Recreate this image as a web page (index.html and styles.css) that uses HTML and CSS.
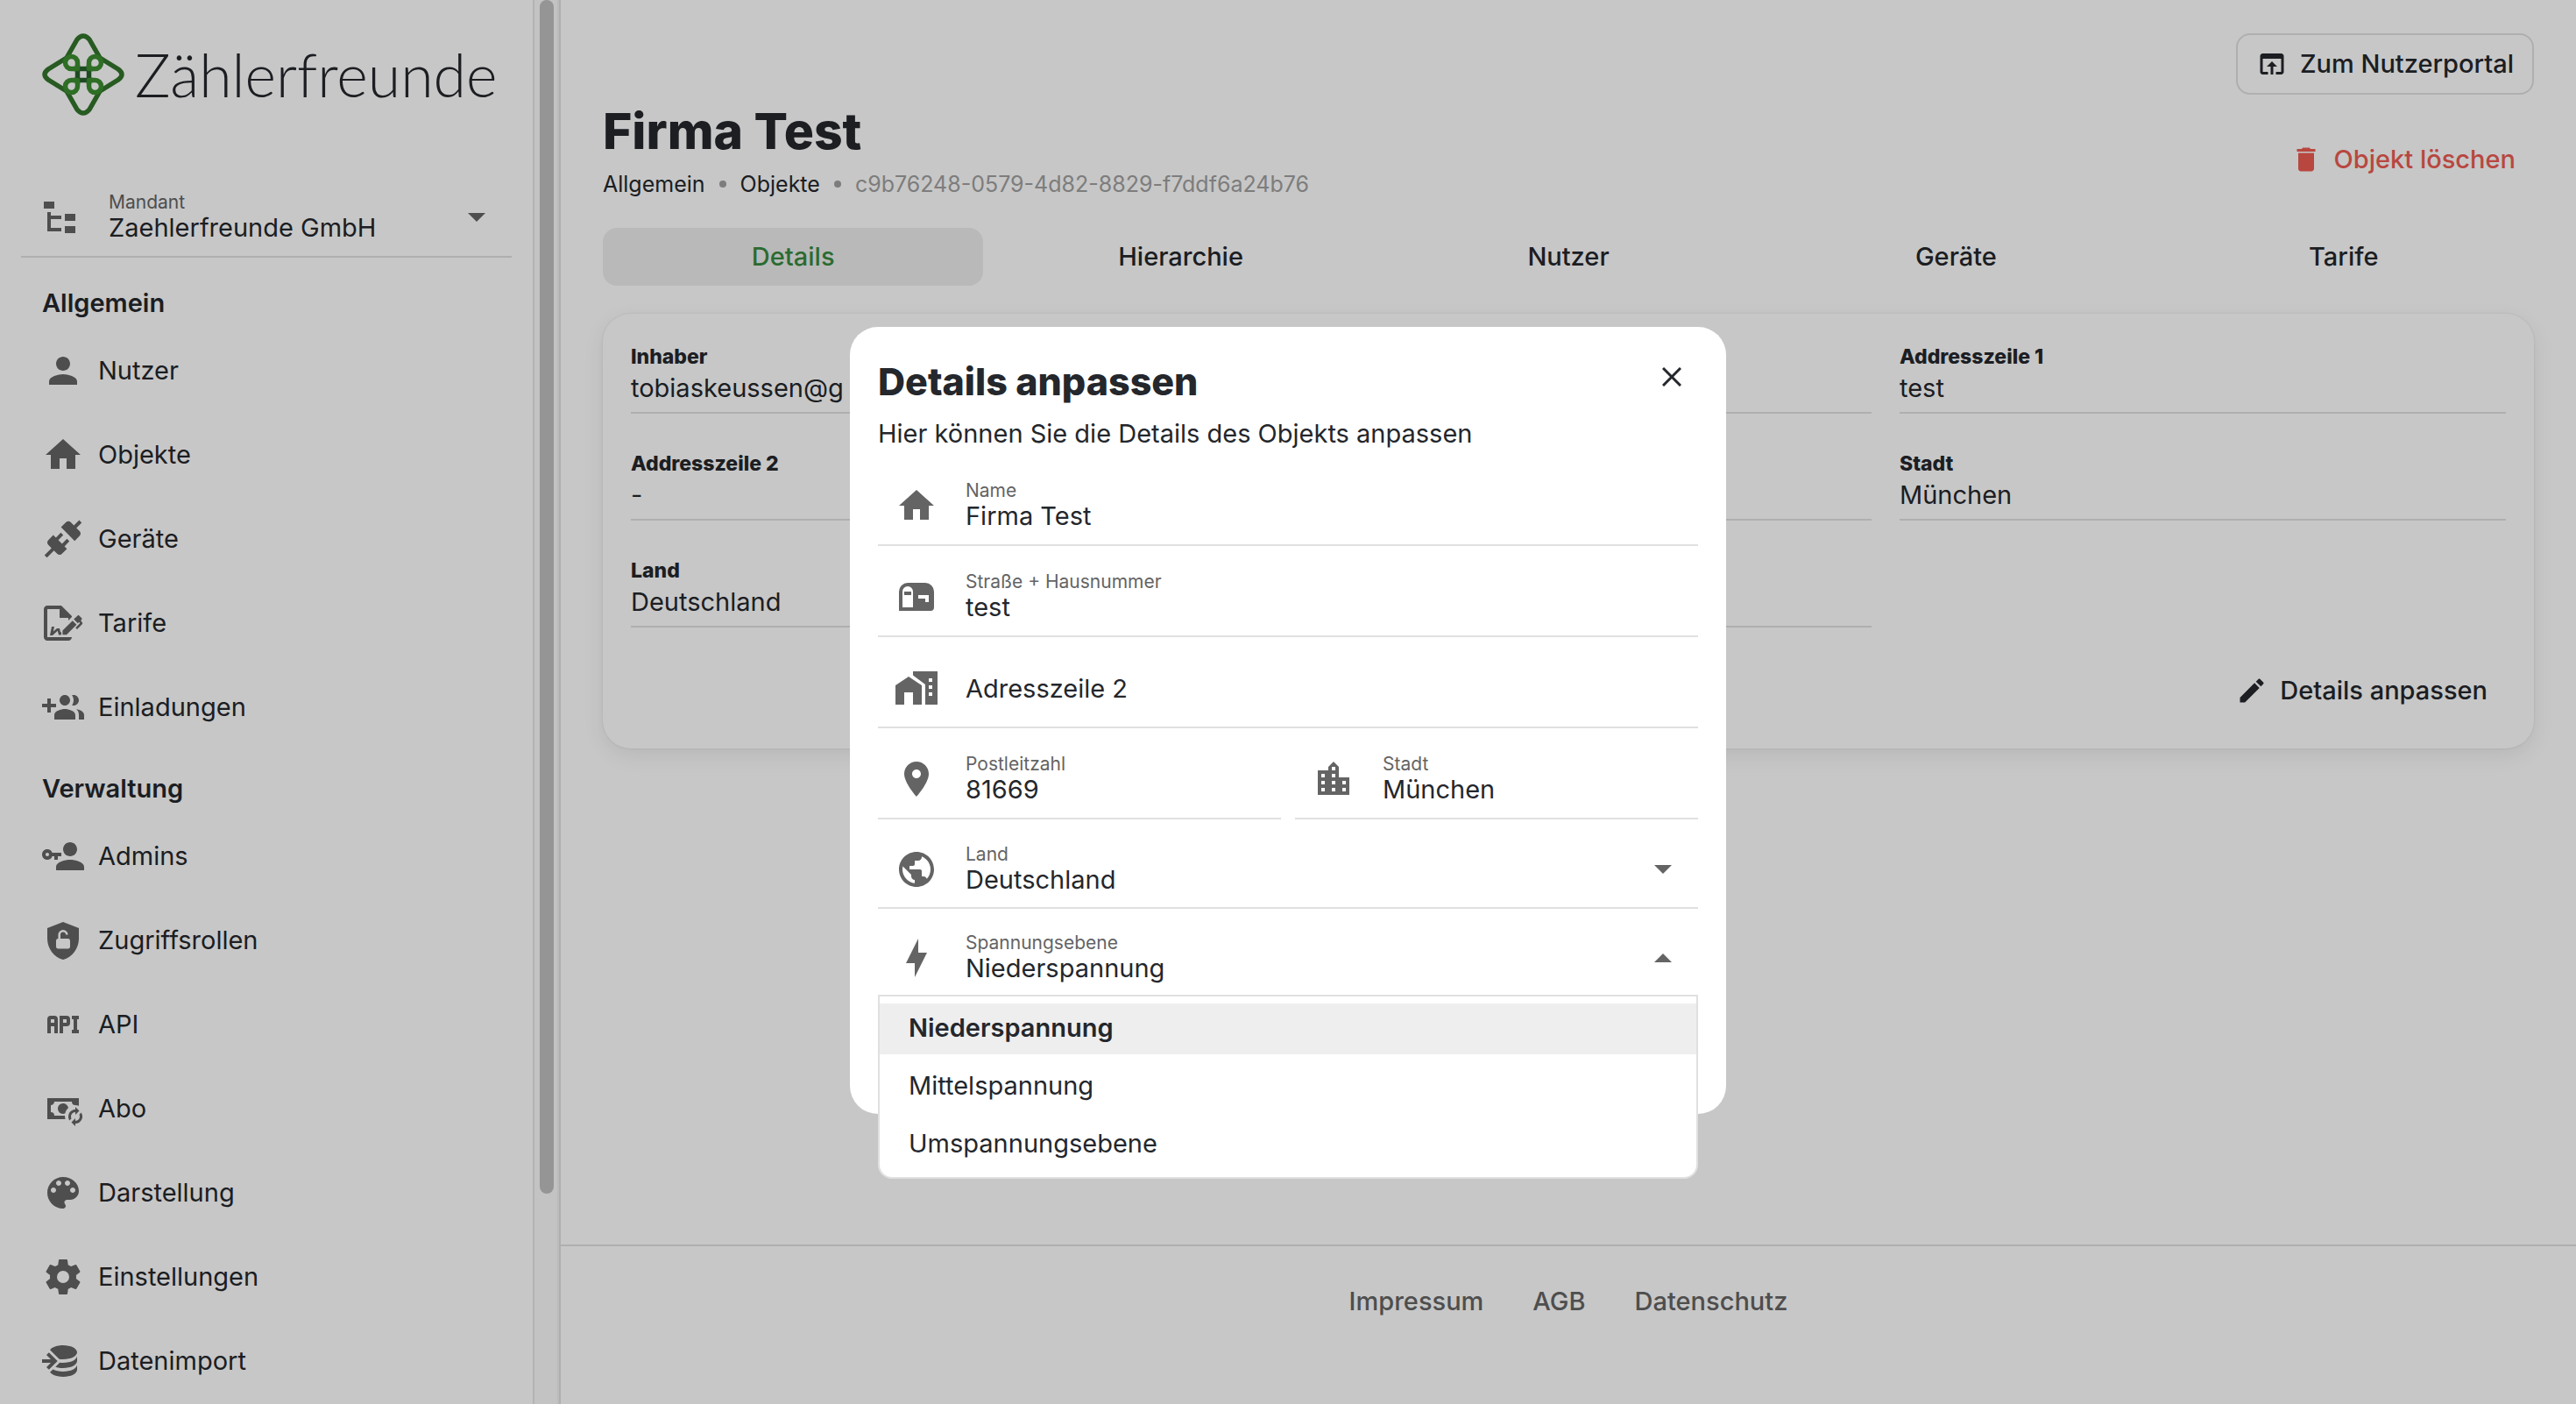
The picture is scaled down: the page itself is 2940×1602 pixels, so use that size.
FILE: index.html
```html
<!DOCTYPE html>
<html lang="de">
<head>
<meta charset="utf-8">
<meta name="viewport" content="width=device-width, initial-scale=1">
<title>Firma Test – Zählerfreunde</title>
<link rel="stylesheet" href="styles.css">
</head>
<body>
<div class="page">
  <aside class="sidebar">
    <div class="sidebar-content">
      <a class="logo" href="#">
        <svg class="logo-mark" viewBox="0 0 94 94" aria-hidden="true">
          <g fill="none" stroke-width="5.5" stroke-linejoin="round">
            <path stroke="#32752b" d="M28 28L40 7Q47-1 54 7L66 28L87 41Q95 47 87 53L66 66L54 87Q47 95 40 87L28 66L7 53Q-1 47 7 41Z"/>
            <path stroke="#26602a" d="M40.500 36V58M53.500 36V58M36 40.500H58M36 53.500H58"/>
            <path stroke="#3b8d30" d="M40.500 40.500H33.500a7 7 0 1 1 7-7ZM53.500 40.500V33.500a7 7 0 1 1 7 7ZM53.500 53.500H60.500a7 7 0 1 1-7 7ZM40.500 53.500V60.500a7 7 0 1 1-7-7Z"/>
          </g>
        </svg>
        <span class="logo-text">Zählerfreunde</span>
      </a>

      <div class="field tenant">
        <svg class="icon" viewBox="0 0 48 48" aria-hidden="true"><path d="M6 6h12v8H6zM10 18h4v4h12v4H14v10h12v4H10zM30 20h12v8H30zM30 34h12v8H30z"/></svg>
        <div class="field-text">
          <label for="tenant">Mandant</label>
          <select id="tenant"><option>Zaehlerfreunde GmbH</option></select>
        </div>
        <svg class="arrow" viewBox="0 0 20 10" aria-hidden="true"><path d="M0 0h20L10 10z"/></svg>
      </div>

      <nav class="nav">
        <h2>Allgemein</h2>
        <a href="#"><svg class="icon" viewBox="0 0 24 24" aria-hidden="true"><path d="M12 12c2.210 0 4-1.790 4-4s-1.790-4-4-4-4 1.790-4 4 1.790 4 4 4zm0 2c-2.670 0-8 1.340-8 4v2h16v-2c0-2.660-5.330-4-8-4z"/></svg>Nutzer</a>
        <a href="#"><svg class="icon" viewBox="0 0 24 24" aria-hidden="true"><path d="M10 20v-6h4v6h5v-8h3L12 3 2 12h3v8z"/></svg>Objekte</a>
        <a href="#"><svg class="icon" viewBox="0 0 24 24" aria-hidden="true"><path d="M21.400 7.500C22.200 8.300 22.200 9.600 21.400 10.300L18.600 13.100L10.800 5.300L13.600 2.500C14.400 1.700 15.700 1.700 16.400 2.500L18.200 4.300L21.200 1.300L22.600 2.700L19.600 5.700L21.400 7.500M15.600 13.300L14.200 11.900L11.400 14.700L9.300 12.600L12.100 9.800L10.700 8.400L7.900 11.200L6.400 9.800L3.600 12.600C2.800 13.400 2.800 14.700 3.600 15.400L5.400 17.200L1.400 21.200L2.800 22.600L6.800 18.600L8.600 20.400C9.400 21.200 10.700 21.200 11.400 20.400L14.200 17.600L12.800 16.200L15.600 13.300Z"/></svg>Geräte</a>
        <a href="#"><svg class="icon" viewBox="0 0 24 24" aria-hidden="true"><path d="M19.700 12.900L14 18.600H11.700V16.300L17.400 10.600L19.700 12.900M23.100 12.100C23.100 12.400 22.800 12.700 22.500 13L20 15.500L19.100 14.600L21.700 12L21.100 11.400L20.400 12.100L18.100 9.800L20.300 7.700C20.500 7.500 20.900 7.500 21.200 7.700L22.600 9.100C22.800 9.300 22.800 9.700 22.600 10C22.400 10.200 22.200 10.400 22.200 10.600C22.200 10.800 22.400 11 22.600 11.200C22.900 11.500 23.200 11.800 23.100 12.100M3 20V4H10V9H15V10.500L17 8.500V8L11 2H3C1.900 2 1 2.900 1 4V20C1 21.100 1.900 22 3 22H15C16.100 22 17 21.100 17 20H3M11 17.100C10.800 17.100 10.600 17.200 10.500 17.200L10 15H8.500L6.400 16.700L7 14H5.500L4.500 19H6L8.900 16.400L9.500 18.700H10.500L11 18.600V17.100Z"/></svg>Tarife</a>
        <a href="#"><svg class="icon" viewBox="0 0 24 24" aria-hidden="true"><path d="M13 13C11 13 7 14 7 16.500V19H19V16.500C19 14 15 13 13 13M19.620 13.160C20.450 13.880 21 14.820 21 16.500V19H24V16.500C24 14.460 21.630 13.500 19.620 13.160M13 11C14.660 11 16 9.660 16 8C16 6.340 14.660 5 13 5C11.340 5 10 6.340 10 8C10 9.660 11.340 11 13 11M18 11C19.660 11 21 9.660 21 8C21 6.340 19.660 5 18 5C17.680 5 17.370 5.050 17.080 5.140C17.650 5.950 18 6.940 18 8C18 9.060 17.650 10.040 17.080 10.850C17.370 10.950 17.680 11 18 11M8 10H5V7H3V10H0V12H3V15H5V12H8V10Z"/></svg>Einladungen</a>
        <h2>Verwaltung</h2>
        <a href="#"><svg class="icon" viewBox="0 0 24 24" aria-hidden="true"><path d="M11 10V12H9V14H7V12H5.800C5.400 13.200 4.300 14 3 14C1.300 14 0 12.700 0 11S1.300 8 3 8C4.300 8 5.400 8.800 5.800 10H11M3 10C2.400 10 2 10.400 2 11S2.400 12 3 12 4 11.600 4 11 3.600 10 3 10M16 14C18.700 14 24 15.300 24 18V20H8V18C8 15.300 13.300 14 16 14M16 12C13.800 12 12 10.200 12 8S13.800 4 16 4 20 5.800 20 8 18.200 12 16 12Z"/></svg>Admins</a>
        <a href="#"><svg class="icon" viewBox="0 0 24 24" aria-hidden="true"><path fill-rule="evenodd" d="M12 1.500L3 5V11C3 16.550 6.840 21.740 12 23C17.160 21.740 21 16.550 21 11V5L12 1.500M9.200 11V8.800a2.800 2.800 0 0 1 5.600 0H13.500a1.500 1.500 0 0 0-3 0V11H14.800a1.200 1.200 0 0 1 1.200 1.200V15.600a1.200 1.200 0 0 1-1.200 1.200H9.200A1.200 1.200 0 0 1 8 15.600V12.200A1.200 1.200 0 0 1 9.200 11Z"/></svg>Zugriffsrollen</a>
        <a href="#"><svg class="icon" viewBox="0 0 24 24" aria-hidden="true"><path d="M7 7H5A2 2 0 0 0 3 9V17H5V13H7V17H9V9A2 2 0 0 0 7 7M7 11H5V9H7M14 7H10V17H12V13H14A2 2 0 0 0 16 11V9A2 2 0 0 0 14 7M14 11H12V9H14M20 9V15H21V17H17V15H18V9H17V7H21V9Z"/></svg>API</a>
        <a href="#"><svg class="icon" viewBox="0 0 24 24" aria-hidden="true"><path d="M3 6v12h10.320a6.400 6.400 0 0 1-.320-2H7a2 2 0 0 0-2-2v-4c1.110 0 2-.890 2-2h10a2 2 0 0 0 2 2v.060c.670 0 1.340.120 2 .340V6H3m9 3c-1.700.030-3 1.300-3 3s1.300 2.940 3 3c.380 0 .770-.080 1.140-.230c.270-1.100.720-2.140 1.830-3.160C14.850 10.280 13.590 8.970 12 9M19 11v1.500c-2.210 0-4 1.790-4 4 0 .820.250 1.580.670 2.210l1.090-1.090c-.170-.340-.260-.720-.260-1.120A2.500 2.500 0 0 1 19 14v1.500l2.250-2.250L19 11m3.330 3.290-1.090 1.090c.170.340.260.720.260 1.120A2.500 2.500 0 0 1 19 19v-1.500l-2.250 2.250L19 22v-1.500a4 4 0 0 0 3.330-6.210z"/></svg>Abo</a>
        <a href="#"><svg class="icon" viewBox="0 0 24 24" aria-hidden="true"><path d="M12 3c-4.970 0-9 4.030-9 9s4.030 9 9 9c.830 0 1.500-.670 1.500-1.500 0-.390-.150-.740-.390-1.010-.230-.260-.380-.610-.380-.990 0-.830.670-1.500 1.500-1.500H16c2.760 0 5-2.240 5-5 0-4.420-4.030-8-9-8zm-5.500 9c-.830 0-1.500-.670-1.500-1.500S5.670 9 6.500 9 8 9.670 8 10.500 7.330 12 6.500 12zm3-4C8.670 8 8 7.330 8 6.500S8.670 5 9.500 5s1.500.670 1.500 1.500S10.330 8 9.500 8zm5 0c-.830 0-1.500-.670-1.500-1.500S13.670 5 14.500 5s1.500.670 1.500 1.500S15.330 8 14.500 8zm3 4c-.830 0-1.500-.670-1.500-1.500S16.670 9 17.500 9s1.500.670 1.500 1.500-.670 1.500-1.500 1.500z"/></svg>Darstellung</a>
        <a href="#"><svg class="icon" viewBox="0 0 24 24" aria-hidden="true"><path d="M12,15.500A3.500,3.500 0 0,1 8.500,12A3.500,3.500 0 0,1 12,8.500A3.500,3.500 0 0,1 15.500,12A3.500,3.500 0 0,1 12,15.500M19.430,12.970C19.470,12.650 19.500,12.330 19.500,12C19.500,11.670 19.470,11.340 19.430,11L21.540,9.370C21.730,9.220 21.780,8.950 21.660,8.730L19.660,5.270C19.540,5.050 19.270,4.960 19.050,5.050L16.560,6.050C16.040,5.660 15.500,5.320 14.870,5.070L14.500,2.420C14.460,2.180 14.250,2 14,2H10C9.750,2 9.540,2.180 9.500,2.420L9.130,5.070C8.500,5.320 7.960,5.660 7.440,6.050L4.950,5.050C4.730,4.960 4.460,5.050 4.340,5.270L2.340,8.730C2.210,8.950 2.270,9.220 2.460,9.370L4.570,11C4.530,11.340 4.500,11.670 4.500,12C4.500,12.330 4.530,12.650 4.570,12.970L2.460,14.630C2.270,14.780 2.210,15.050 2.340,15.270L4.340,18.730C4.460,18.950 4.730,19.030 4.950,18.950L7.440,17.940C7.960,18.340 8.500,18.680 9.130,18.930L9.500,21.580C9.540,21.820 9.750,22 10,22H14C14.250,22 14.460,21.820 14.500,21.580L14.870,18.930C15.500,18.670 16.040,18.340 16.560,17.940L19.050,18.950C19.270,19.030 19.540,18.950 19.660,18.730L21.660,15.270C21.780,15.050 21.730,14.780 21.540,14.630L19.430,12.970Z"/></svg>Einstellungen</a>
        <a href="#"><svg class="icon" viewBox="0 0 24 24" aria-hidden="true"><path d="M12,3C8.590,3 5.690,4.070 4.540,5.570L9.790,10.820C10.500,10.930 11.220,11 12,11C16.420,11 20,9.210 20,7C20,4.790 16.420,3 12,3M3.920,7.080L2.500,8.500L5,11H0V13H5L2.500,15.500L3.920,16.920L8.840,12M20,9C20,11.210 16.420,13 12,13C11.340,13 10.700,12.950 10.090,12.870L7.620,15.340C8.880,15.750 10.380,16 12,16C16.420,16 20,14.210 20,12M20,14C20,16.210 16.420,18 12,18C9.720,18 7.670,17.500 6.210,16.750L4.530,18.430C5.680,19.930 8.590,21 12,21C16.420,21 20,19.210 20,17"/></svg>Datenimport</a>
      </nav>
    </div>
    <div class="scroll-track"><div class="scroll-thumb"></div></div>
  </aside>

  <div class="main">
    <main class="content">
      <div class="topbar">
        <button class="btn btn-outline" type="button"><svg class="icon-small" viewBox="0 0 24 24" aria-hidden="true"><path d="M19 4H5c-1.110 0-2 .900-2 2v12c0 1.100.890 2 2 2h4v-2H5V8h14v10h-4v2h4c1.100 0 2-.900 2-2V6c0-1.100-.890-2-2-2zm-7 6l-4 4h3v6h2v-6h3l-4-4z"/></svg>Zum Nutzerportal</button>
      </div>
      <header class="heading">
        <div>
          <h1>Firma Test</h1>
          <nav class="breadcrumb" aria-label="Pfad">
            <a href="#">Allgemein</a><span class="dot"></span><a href="#">Objekte</a><span class="dot"></span><span class="current">c9b76248-0579-4d82-8829-f7ddf6a24b76</span>
          </nav>
        </div>
        <button class="btn btn-danger" type="button"><svg class="icon-small" viewBox="0 0 24 24" aria-hidden="true"><path d="M6 19c0 1.100.900 2 2 2h8c1.100 0 2-.900 2-2V7H6v12zM19 4h-3.500l-1-1h-5l-1 1H5v2h14V4z"/></svg>Objekt löschen</button>
      </header>

      <nav class="tabs">
        <a class="active" href="#">Details</a>
        <a href="#">Hierarchie</a>
        <a href="#">Nutzer</a>
        <a href="#">Geräte</a>
        <a href="#">Tarife</a>
      </nav>

      <section class="card">
        <dl class="facts">
          <div><dt>Inhaber</dt><dd>tobiaskeussen@g</dd></div>
          <div><dt>Name</dt><dd>Firma Test</dd></div>
          <div><dt>Addresszeile 1</dt><dd>test</dd></div>
          <div><dt>Addresszeile 2</dt><dd>-</dd></div>
          <div><dt>PLZ</dt><dd>81669</dd></div>
          <div><dt>Stadt</dt><dd>München</dd></div>
          <div><dt>Land</dt><dd>Deutschland</dd></div>
          <div><dt>Ebene</dt><dd>Niederspannung</dd></div>
        </dl>
        <div class="card-actions">
          <button class="btn" type="button"><svg class="icon-small" viewBox="0 0 24 24" aria-hidden="true"><path d="M3 17.250V21h3.750L17.810 9.940l-3.750-3.750L3 17.250zM20.710 7.040c.390-.390.390-1.020 0-1.410l-2.340-2.340c-.390-.390-1.020-.390-1.410 0l-1.830 1.830 3.750 3.750 1.830-1.830z"/></svg>Details anpassen</button>
        </div>
      </section>
    </main>
    <footer class="footer">
      <a href="#">Impressum</a>
      <a href="#">AGB</a>
      <a href="#">Datenschutz</a>
    </footer>
  </div>
</div>

<div class="backdrop">
  <section class="modal" role="dialog" aria-modal="true" aria-labelledby="modal-title">
    <header class="modal-head">
      <h2 id="modal-title">Details anpassen</h2>
      <button class="close" type="button" aria-label="Schließen"><svg viewBox="0 0 22 22" aria-hidden="true"><path d="M1 1l20 20M21 1L1 21" fill="none" stroke="currentColor" stroke-width="3"/></svg></button>
    </header>
    <p>Hier können Sie die Details des Objekts anpassen</p>
    <form>
      <div class="field">
        <svg class="icon" viewBox="0 0 24 24" aria-hidden="true"><path d="M10 20v-6h4v6h5v-8h3L12 3 2 12h3v8z"/></svg>
        <div class="field-text"><label for="name">Name</label><input id="name" type="text" value="Firma Test"></div>
      </div>
      <div class="field">
        <svg class="icon" viewBox="0 0 24 24" aria-hidden="true"><path d="M17,4H7A5,5 0 0,0 2,9V20H20A2,2 0 0,0 22,18V9A5,5 0 0,0 17,4M10,18H4V9A3,3 0 0,1 7,6A3,3 0 0,1 10,9V18M19,15H17V13H13V11H19V15M9,11H5V9H9V11Z"/></svg>
        <div class="field-text"><label for="street">Straße + Hausnummer</label><input id="street" type="text" value="test"></div>
      </div>
      <div class="field">
        <svg class="icon" viewBox="0 0 24 24" aria-hidden="true"><path fill-rule="evenodd" d="M0 10.500v11h5v-7h5v7h5v-11L7.500 5.500zM10 2.500v2.300l7 5.200v11.500h7v-19zm9 4h2v2h-2zM19 10.500h2v2h-2zM19 14.500h2v2h-2z"/></svg>
        <div class="field-text"><input type="text" placeholder="Adresszeile 2" aria-label="Adresszeile 2"></div>
      </div>
      <div class="field-row">
        <div class="field">
          <svg class="icon" viewBox="0 0 24 24" aria-hidden="true"><path d="M12 2C8.130 2 5 5.130 5 9c0 5.250 7 13 7 13s7-7.750 7-13c0-3.870-3.130-7-7-7zm0 9.500c-1.380 0-2.500-1.120-2.500-2.500s1.120-2.500 2.500-2.500 2.500 1.120 2.500 2.500-1.120 2.500-2.500 2.500z"/></svg>
          <div class="field-text"><label for="zip">Postleitzahl</label><input id="zip" type="text" value="81669"></div>
        </div>
        <div class="field">
          <svg class="icon" viewBox="0 0 24 24" aria-hidden="true"><path d="M15 11V5l-3-3-3 3v2H3v14h18V11h-6zm-8 8H5v-2h2v2zm0-4H5v-2h2v2zm0-4H5V9h2v2zm6 8h-2v-2h2v2zm0-4h-2v-2h2v2zm0-4h-2V9h2v2zm0-4h-2V5h2v2zm6 12h-2v-2h2v2zm0-4h-2v-2h2v2z"/></svg>
          <div class="field-text"><label for="city">Stadt</label><input id="city" type="text" value="München"></div>
        </div>
      </div>
      <div class="field field-select">
        <svg class="icon" viewBox="0 0 24 24" aria-hidden="true"><path d="M12 2C6.480 2 2 6.480 2 12s4.480 10 10 10 10-4.480 10-10S17.520 2 12 2zm-1 17.930c-3.950-.490-7-3.850-7-7.930 0-.620.080-1.210.210-1.790L9 15v1c0 1.100.900 2 2 2v1.930zm6.900-2.540c-.260-.810-1-1.390-1.900-1.390h-1v-3c0-.550-.450-1-1-1H8v-2h2c.550 0 1-.450 1-1V7h2c1.100 0 2-.900 2-2v-.410c2.930 1.190 5 4.060 5 7.410 0 2.080-.800 3.970-2.100 5.390z"/></svg>
        <div class="field-text"><label for="country">Land</label><select id="country"><option>Deutschland</option></select></div>
        <svg class="arrow" viewBox="0 0 20 10" aria-hidden="true"><path d="M0 0h20L10 10z"/></svg>
      </div>
      <div class="field field-open">
        <svg class="icon" viewBox="0 0 24 24" aria-hidden="true"><path d="M11 15H6L13 1V9H18L11 23V15Z"/></svg>
        <div class="field-text"><label for="level">Spannungsebene</label><select id="level"><option>Niederspannung</option><option>Mittelspannung</option><option>Umspannungsebene</option></select></div>
        <svg class="arrow" viewBox="0 0 20 10" aria-hidden="true"><path d="M0 10h20L10 0z"/></svg>
        <ul class="menu" role="listbox" aria-label="Spannungsebene">
          <li class="selected" role="option" aria-selected="true">Niederspannung</li>
          <li role="option" aria-selected="false">Mittelspannung</li>
          <li role="option" aria-selected="false">Umspannungsebene</li>
        </ul>
      </div>
    </form>
  </section>
</div>
</body>
</html>
```
FILE: styles.css
```css
:root {
  --text: #24272c;
  --muted: #646464;
  --line: #e0e0e0;
}

* {
  box-sizing: border-box;
}

body {
  margin: 0;
  background: #fff;
  color: var(--text);
  font-family: Inter, "Open Sans", sans-serif;
  font-size: 29px;
  line-height: 36px;
}

h1, h2, p, dl, dd, ul {
  margin: 0;
  padding: 0;
}

a {
  color: inherit;
  text-decoration: none;
}

button, input, select {
  border: 0;
  padding: 0;
  background: none;
  color: inherit;
  font: inherit;
}

svg {
  display: block;
  flex: none;
  fill: currentColor;
}

.icon {
  width: 48px;
  height: 48px;
  color: var(--muted);
}

.icon-small {
  width: 36px;
  height: 36px;
}

.arrow {
  width: 20px;
  height: 10px;
  color: var(--muted);
}

.page {
  display: grid;
  grid-template-columns: 640px minmax(0, 1fr);
  height: 100vh;
}

/* Sidebar */
.sidebar {
  display: flex;
  height: 100vh;
  overflow: hidden;
  border-right: 2px solid var(--line);
}

.sidebar-content {
  flex: 1;
  min-width: 0;
}

.scroll-track {
  width: 30px;
  padding: 0 4px 0 6px;
  background: #fafafa;
  border-left: 2px solid #e6e6e6;
  border-right: 2px solid #f0f0f0;
}

.scroll-thumb {
  width: 16px;
  height: 85%;
  border-radius: 8px;
  background: #bfbfbf;
}

.logo {
  display: flex;
  align-items: center;
  gap: 12px;
  padding: 38px 24px 58px 48px;
}

.logo-mark {
  width: 94px;
  height: 94px;
}

.logo-text {
  font-family: Lato, sans-serif;
  font-size: 68px;
  font-weight: 300;
  line-height: 72px;
}

.field {
  position: relative;
  display: flex;
  align-items: center;
  height: 104px;
  padding: 14px 30px 0 20px;
  border-bottom: 2px solid var(--line);
}

.field-text {
  display: flex;
  flex: 1;
  flex-direction: column;
  min-width: 0;
  padding: 2px 0 0 32px;
}

.field label {
  color: var(--muted);
  font-size: 21px;
  line-height: 22px;
}

.field input,
.field select {
  width: 100%;
  height: 36px;
  line-height: 36px;
  outline: 0;
  appearance: none;
}

.field input::placeholder {
  color: var(--text);
  opacity: 1;
}

.tenant {
  margin: 0 24px 7px;
}

.nav h2 {
  padding: 27px 48px 11px;
  font-size: 29px;
  font-weight: 600;
  line-height: 36px;
}

.nav a {
  display: flex;
  align-items: center;
  gap: 16px;
  height: 96px;
  padding: 0 48px;
}

/* Main column */
.main {
  display: flex;
  flex-direction: column;
  min-width: 0;
}

.content {
  flex: 1;
  padding: 38px 48px;
}

.topbar {
  display: flex;
  justify-content: flex-end;
}

.btn {
  display: flex;
  align-items: center;
  gap: 14px;
  height: 68px;
  padding: 0 21px;
  border-radius: 16px;
  font-weight: 500;
}

.btn-outline {
  height: 70px;
  border: 2px solid var(--line);
}

.btn-danger {
  margin-top: 32px;
  color: #ec5c53;
}

.heading {
  display: flex;
  justify-content: space-between;
  align-items: flex-start;
  margin-top: 8px;
}

h1 {
  font-size: 57px;
  font-weight: 800;
  line-height: 68px;
}

.breadcrumb {
  display: flex;
  align-items: center;
  gap: 16px;
  margin-top: 8px;
  font-size: 25px;
  line-height: 36px;
}

.dot {
  width: 8px;
  height: 8px;
  border-radius: 4px;
  background: #a0a0a0;
}

.current {
  color: #a0a0a0;
}

.tabs {
  display: grid;
  grid-template-columns: repeat(5, 1fr);
  gap: 8px;
  margin: 32px 0;
}

.tabs a {
  padding: 15px 0;
  border-radius: 16px;
  font-weight: 500;
  text-align: center;
}

.tabs .active {
  background: #eee;
  color: #388a3e;
}

.card {
  padding: 32px;
  border-radius: 32px;
  box-shadow: 0 8px 24px rgba(0, 0, 0, .08), 0 0 3px rgba(0, 0, 0, .1);
}

.facts {
  display: grid;
  grid-template-columns: repeat(3, 1fr);
  gap: 40px 32px;
}

.facts div {
  padding-bottom: 8px;
  border-bottom: 2px solid var(--line);
}

.facts dt {
  font-size: 23px;
  font-weight: 800;
  line-height: 34px;
}

.facts dd {
  line-height: 38px;
}

.card-actions {
  display: flex;
  justify-content: flex-end;
  margin-top: 38px;
}

.footer {
  display: flex;
  flex-wrap: wrap;
  justify-content: center;
  gap: 56px;
  padding: 45px 48px 99px;
  border-top: 2px solid var(--line);
  color: var(--muted);
  font-weight: 500;
}

/* Dialog */
.backdrop {
  position: fixed;
  inset: 0;
  display: flex;
  justify-content: center;
  align-items: flex-start;
  padding-top: 373px;
  background: rgba(0, 0, 0, .22);
}

.modal {
  width: 1000px;
  max-width: 100%;
  padding: 30px 32px 134px;
  border-radius: 32px;
  background: #fff;
}

.modal-head {
  display: flex;
  justify-content: space-between;
}

.modal-head h2 {
  font-size: 43px;
  font-weight: 800;
  line-height: 64px;
}

.close {
  display: grid;
  place-items: center;
  width: 60px;
  height: 54px;
}

.close svg {
  width: 22px;
  height: 22px;
}

.modal p {
  margin: 10px 0 6px;
}

.field-row {
  display: grid;
  grid-template-columns: 1fr 1fr;
  gap: 16px;
}

.field-select {
  height: 102px;
}

.field-open {
  height: 100px;
}

.menu {
  position: absolute;
  top: 84px;
  left: 0;
  right: 0;
  display: grid;
  gap: 8px;
  margin-top: 14px;
  padding: 8px 0;
  border: 2px solid var(--line);
  border-radius: 0 0 16px 16px;
  background: #fff;
  list-style: none;
}

.menu li {
  padding: 10px 33px 12px;
}

.menu .selected {
  background: #eee;
  font-weight: 600;
}
```
